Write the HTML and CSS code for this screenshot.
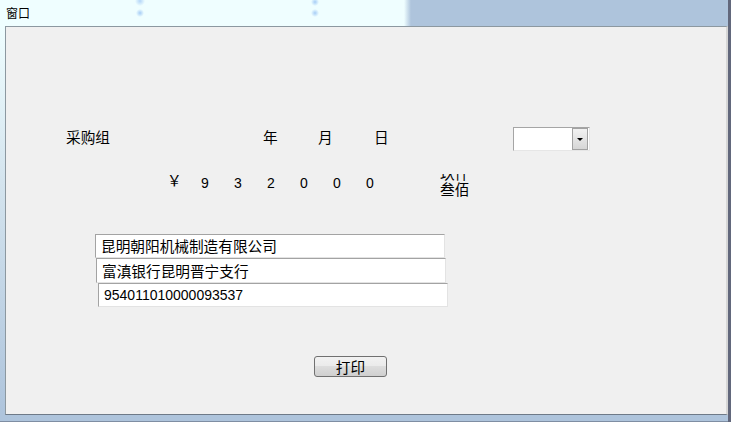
FILE: index.html
```html
<!DOCTYPE html>
<html lang="zh-CN">
<head>
    <meta charset="UTF-8">
    <title>窗口</title>
    <link rel="stylesheet" href="styles.css">
</head>
<body>
    <div class="screen">
        <div class="titlebar"><span class="title">窗口</span></div>
        <div class="main">
            <div class="edge"></div>
            <div class="client">
                <div class="row row-date">
                    <span class="cell c-group">采购组</span>
                    <span class="cell c-year">年</span>
                    <span class="cell c-month">月</span>
                    <span class="cell c-day">日</span>
                    <div class="combo">
                        <div class="combo-btn"><span class="arrow"></span></div>
                    </div>
                </div>

                <div class="row row-amount">
                    <span class="yen">￥</span>
                    <span class="digit">9</span>
                    <span class="digit">3</span>
                    <span class="digit">2</span>
                    <span class="digit">0</span>
                    <span class="digit">0</span>
                    <span class="digit">0</span>
                    <div class="words">
                        <span>玖仟</span>
                        <span>叁佰</span>
                    </div>
                </div>

                <div class="fields">
                    <div class="field f1">昆明朝阳机械制造有限公司</div>
                    <div class="field f2">富滇银行昆明晋宁支行</div>
                    <div class="field f3">954011010000093537</div>
                </div>

                <button class="btn">打印</button>
            </div>
        </div>
        <div class="bottom"></div>
    </div>
</body>
</html>
```

FILE: styles.css
```css
body {
    margin: 0;
    font-family: "Liberation Sans", "Noto Sans CJK SC", sans-serif;
    color: #000;
    overflow: hidden;
}
.screen {
    width: 728px;
    height: 422px;
    border-right: 3px solid #62687c;
    background: #aec4dc;
    display: flex;
    flex-direction: column;
}
.titlebar {
    height: 26px;
    padding-left: 6px;
    box-sizing: border-box;
    background:
        radial-gradient(circle at 140px 13px, #a6cdf6 0, rgba(166, 205, 246, 0) 4px),
        radial-gradient(circle at 140px 1px, #b4d6f8 0, rgba(180, 214, 248, 0) 5px),
        radial-gradient(circle at 315px 13px, #a6cdf6 0, rgba(166, 205, 246, 0) 4px),
        radial-gradient(circle at 315px 2px, #a6cdf6 0, rgba(166, 205, 246, 0) 4px),
        linear-gradient(to right, #effeff 404px, #aec4dc 411px);
}
.title {
    font-size: 12px;
    line-height: 25px;
    font-family: "Noto Sans CJK SC", sans-serif;
}
.main {
    height: 389px;
    display: flex;
}
.edge {
    width: 5px;
    background: linear-gradient(to bottom, #effeff, #d4e4ee 40%, #aec4dc);
}
.client {
    flex: 1;
    box-sizing: border-box;
    background: #f0f0f0;
    border-top: 1px solid #8c98a0;
    border-left: 1px solid #8c98a0;
    border-bottom: 1px solid #6e7a88;
    border-right: 2px solid #d6d6d6;
    font-size: 14.67px;
}
.bottom {
    height: 6px;
    border-bottom: 1px solid #7f8ea3;
    background: #aec4dc;
}

.row {
    display: flex;
}
.row-date {
    margin-top: 100px;
    padding-left: 60px;
    height: 24px;
    align-items: center;
}
.cell {
    font-family: "Noto Sans CJK SC", sans-serif;
    line-height: 16px;
    margin-bottom: 4px;
}
.c-group { width: 197px; }
.c-year { width: 55px; }
.c-month { width: 56px; }
.c-day { width: 139px; }

.combo {
    width: 77px;
    height: 24px;
    box-sizing: border-box;
    background: #fff;
    border-top: 1px solid #a5a5a5;
    border-left: 1px solid #a5a5a5;
    border-right: 1px solid #e6e6e6;
    border-bottom: 1px solid #e6e6e6;
    display: flex;
    justify-content: flex-end;
}
.combo-btn {
    width: 16px;
    height: 22px;
    box-sizing: border-box;
    margin-right: 1px;
    border: 1px solid #a2a2a2;
    background: linear-gradient(to bottom, #f2f2f2, #d6d6d6);
    display: flex;
    align-items: center;
    justify-content: center;
}
.arrow {
    width: 0;
    height: 0;
    border-left: 3px solid transparent;
    border-right: 3px solid transparent;
    border-top: 3px solid #000;
}

.row-amount {
    margin-top: 20px;
    padding-left: 161px;
    height: 26px;
    align-items: flex-start;
    font-size: 14px;
    line-height: 24px;
}
.yen {
    width: 34px;
    font-family: "Noto Sans CJK SC", sans-serif;
    font-size: 14.67px;
    line-height: 17px;
}
.digit {
    width: 33px;
    font-size: 14px;
}
.words {
    margin-left: 41px;
    margin-top: 3px;
    height: 23px;
    overflow: hidden;
    display: flex;
    flex-direction: column;
    justify-content: flex-end;
    font-family: "Noto Sans CJK SC", sans-serif;
    font-size: 14.67px;
    line-height: 16px;
}

.fields {
    margin-top: 37px;
    display: flex;
    flex-direction: column;
}
.field {
    width: 350px;
    box-sizing: border-box;
    background: #fff;
    border-top: 1px solid #a3a3a3;
    border-left: 1px solid #a3a3a3;
    border-right: 1px solid #e3e3e3;
    border-bottom: 1px solid #e3e3e3;
    padding-left: 5px;
    font-family: "Noto Sans CJK SC", sans-serif;
}
.f1 {
    margin-left: 89px;
    height: 24px;
    line-height: 22px;
}
.f2 {
    margin-left: 90px;
    height: 25px;
    line-height: 23px;
}
.f3 {
    margin-left: 92px;
    height: 24px;
    line-height: 22px;
    font-family: "Liberation Sans", sans-serif;
    font-size: 14px;
}

.btn {
    display: block;
    margin: 49px 0 0 308px;
    width: 73px;
    height: 21px;
    padding: 0;
    border: 1px solid #707070;
    border-radius: 3px;
    background: linear-gradient(to bottom, #f2f2f2 0, #ebebeb 45%, #dddddd 50%, #cfcfcf 100%);
    font-family: "Noto Sans CJK SC", sans-serif;
    font-size: 14.67px;
    line-height: 18px;
    color: #000;
}
```
